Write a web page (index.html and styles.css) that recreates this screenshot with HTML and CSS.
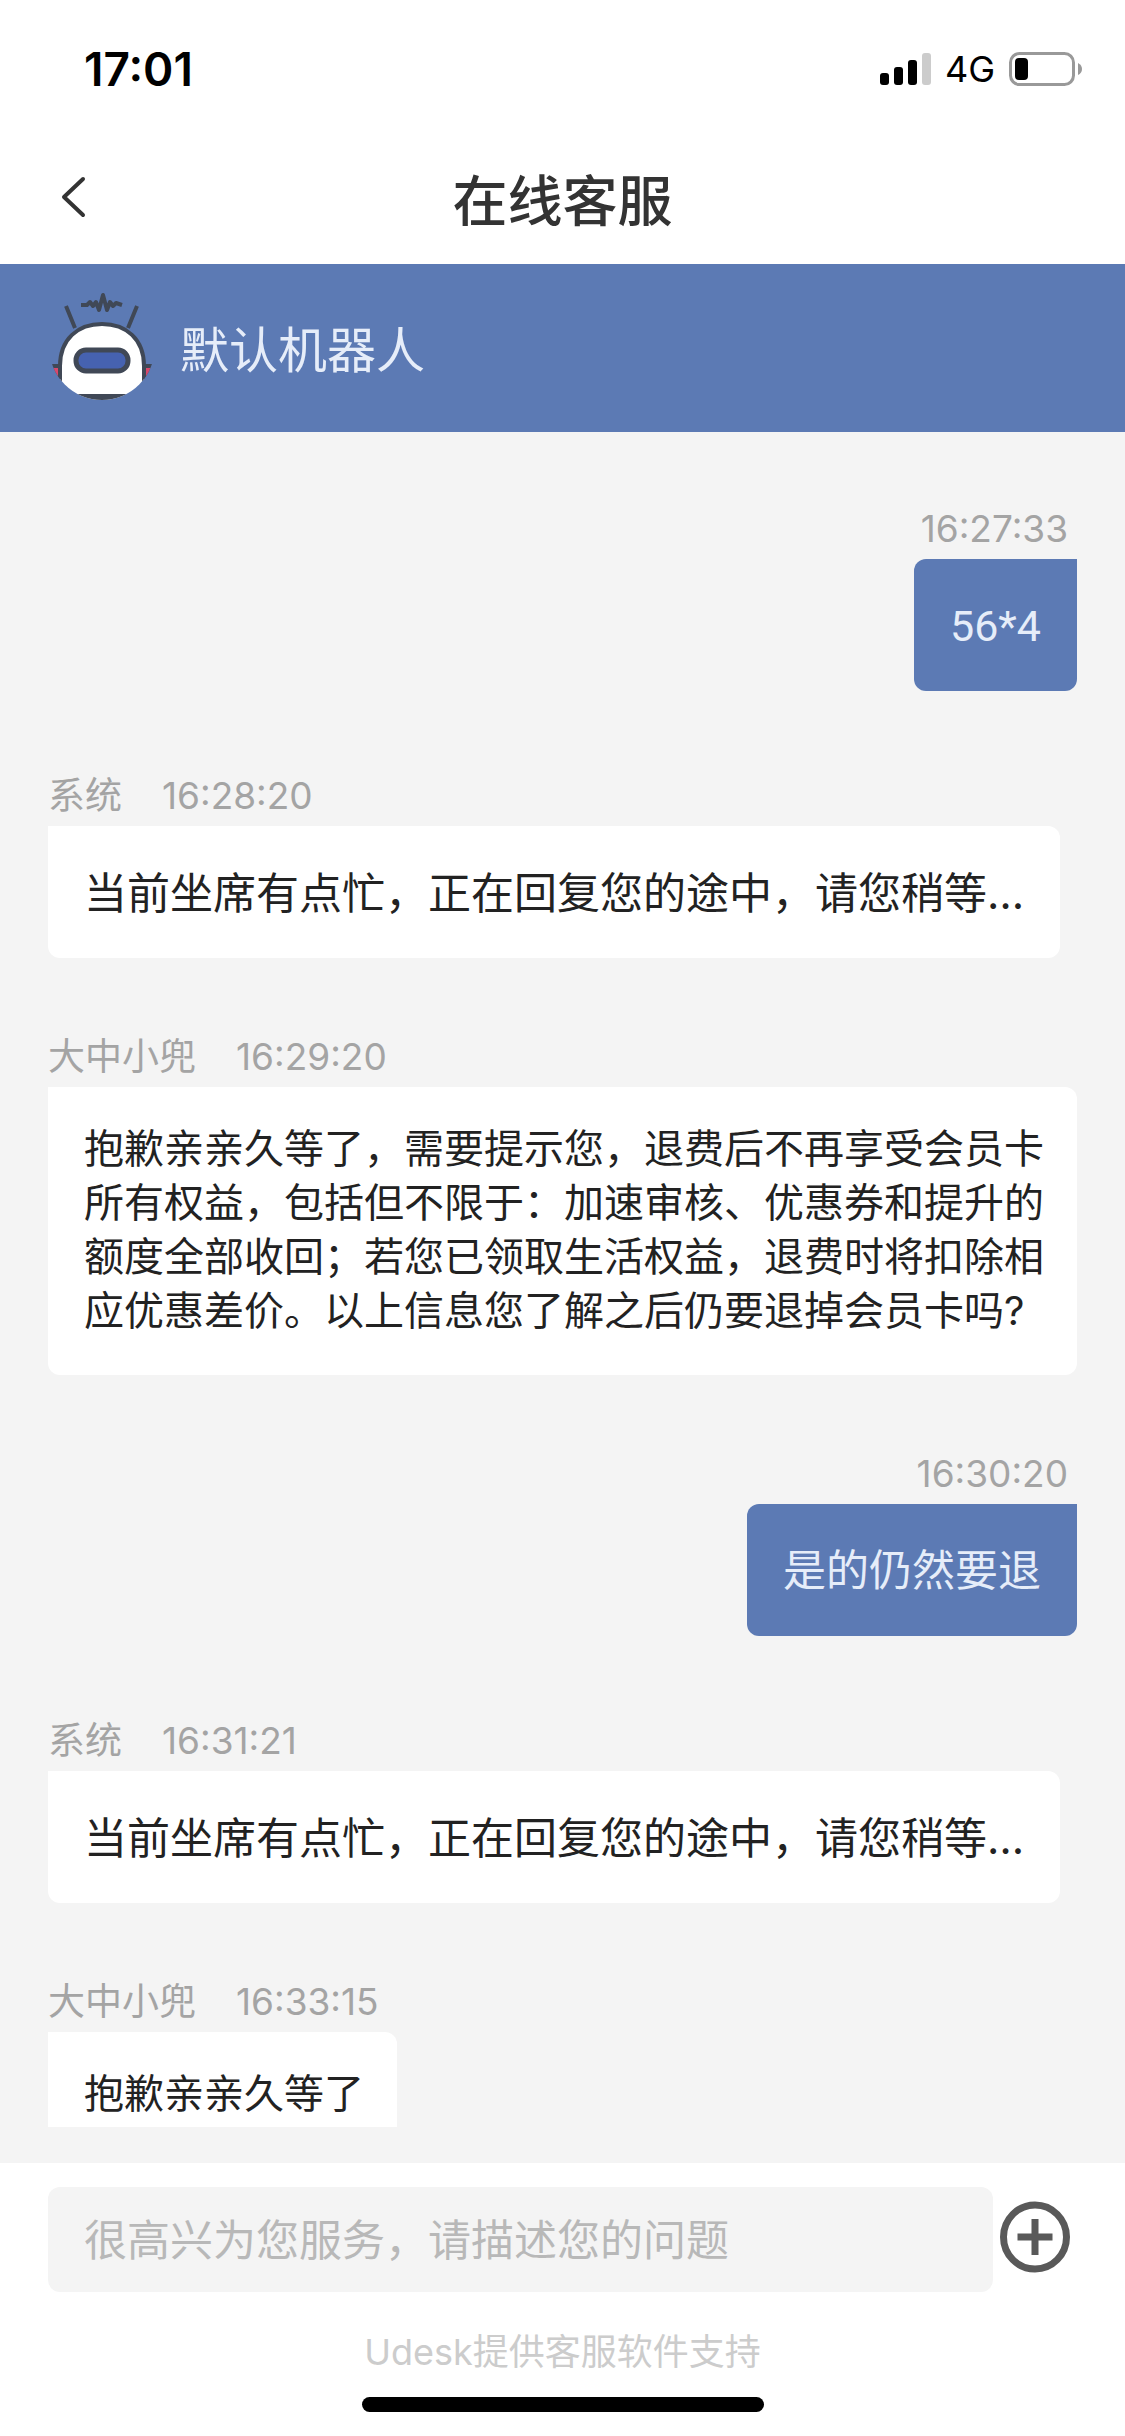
FILE: index.html
```html
<!DOCTYPE html>
<html lang="zh-CN">
<head>
    <meta charset="UTF-8">
    <meta name="viewport" content="width=device-width, initial-scale=1.0">
    <title>在线客服</title>
    <link rel="stylesheet" href="styles.css">
</head>
<body>
    <div class="status-bar">
        <span class="clock">17:01</span>
        <div class="status-icons">
            <svg class="signal" width="51" height="34" viewBox="0 0 51 34" aria-hidden="true">
                <rect x="0" y="21" width="9" height="12" rx="3"/>
                <rect x="14" y="15" width="9" height="18" rx="3"/>
                <rect x="28" y="8" width="9" height="25" rx="3"/>
                <rect x="42" y="1" width="9" height="32" rx="3" fill="#cccccc"/>
            </svg>
            <span class="network">4G</span>
            <svg class="battery" width="74" height="34" viewBox="0 0 74 34" aria-hidden="true">
                <rect x="1.5" y="1.5" width="63" height="31" rx="9" fill="none" stroke="#999999" stroke-width="3"/>
                <rect x="6" y="6" width="13" height="22" rx="4"/>
                <path d="M69 11q4 2 4 6t-4 6z" fill="#999999"/>
            </svg>
        </div>
    </div>

    <header class="nav-bar">
        <button type="button" class="back" aria-label="返回">
            <svg width="28" height="44" viewBox="0 0 28 44" aria-hidden="true">
                <path d="M24 4L5 22l19 18" fill="none" stroke="#333333" stroke-width="4" stroke-linecap="round" stroke-linejoin="round"/>
            </svg>
        </button>
        <h1>在线客服</h1>
    </header>

    <div class="agent-bar">
        <svg class="avatar" width="130" height="140" viewBox="0 0 130 140" aria-hidden="true">
            <clipPath id="avatar-clip"><ellipse cx="62" cy="68" rx="53" ry="54"/></clipPath>
            <g stroke="#404856" fill="none">
                <path d="M41 27h6l3-3 3 4 3-4 3 8 4-15 4 15 3-8 3 4 3-3 6 2" stroke-width="4" stroke-linejoin="round"/>
                <path d="M26 28l9 22M97 28l-9 22" stroke-width="4"/>
            </g>
            <g clip-path="url(#avatar-clip)">
                <path d="M10 86h10v18H10zM103 86h12v18h-12z" fill="#404856"/>
                <path d="M12 90h6v9h-6zM106 90h8v9h-8z" fill="#d9486c"/>
                <path d="M20 130V88C20 61 38 46 62 46s42 15 42 42v42z" fill="#ffffff" stroke="#404856" stroke-width="4"/>
                <path d="M20 116h84v8H20z" fill="#404856"/>
                <rect x="36" y="72" width="52" height="21" rx="10" fill="#4662b0" stroke="#404856" stroke-width="5"/>
            </g>
        </svg>
        <h2>默认机器人</h2>
    </div>

    <main class="chat">
        <div class="message mine">
            <div class="meta"><time>16:27:33</time></div>
            <p class="bubble">56*4</p>
        </div>

        <div class="message">
            <div class="meta"><span>系统</span><time>16:28:20</time></div>
            <p class="bubble">当前坐席有点忙，正在回复您的途中，请您稍等…</p>
        </div>

        <div class="message">
            <div class="meta"><span>大中小兜</span><time>16:29:20</time></div>
            <p class="bubble rich">抱歉亲亲久等了，需要提示您，退费后不再享受会员卡所有权益，包括但不限于：加速审核、优惠券和提升的额度全部收回；若您已领取生活权益，退费时将扣除相应优惠差价。以上信息您了解之后仍要退掉会员卡吗?</p>
        </div>

        <div class="message mine">
            <div class="meta"><time>16:30:20</time></div>
            <p class="bubble">是的仍然要退</p>
        </div>

        <div class="message">
            <div class="meta"><span>系统</span><time>16:31:21</time></div>
            <p class="bubble">当前坐席有点忙，正在回复您的途中，请您稍等…</p>
        </div>

        <div class="message">
            <div class="meta"><span>大中小兜</span><time>16:33:15</time></div>
            <p class="bubble rich">抱歉亲亲久等了</p>
        </div>
    </main>

    <footer class="footer">
        <form class="composer">
            <input type="text" aria-label="输入问题" placeholder="很高兴为您服务，请描述您的问题">
            <button type="button" aria-label="更多">
                <svg width="70" height="72" viewBox="0 0 70 72" aria-hidden="true">
                    <ellipse cx="35" cy="36" rx="31.500" ry="32" fill="none" stroke="#595959" stroke-width="7"/>
                    <path d="M35 18v36M17.500 36h35" stroke="#595959" stroke-width="7"/>
                </svg>
            </button>
        </form>
        <p class="powered">Udesk提供客服软件支持</p>
        <div class="home-bar"></div>
    </footer>
</body>
</html>
```
FILE: styles.css
```css
* {
    box-sizing: border-box;
}
body {
    display: flex;
    flex-direction: column;
    height: 100vh;
    margin: 0;
    background-color: #f4f4f4;
    color: #222222;
    font-family: Inter, "Noto Sans CJK SC", sans-serif;
}
h1, h2, p {
    margin: 0;
}
button {
    display: flex;
    padding: 0;
    border: none;
    background: none;
    cursor: pointer;
}

/* 顶部状态栏 */
.status-bar {
    display: flex;
    justify-content: space-between;
    align-items: center;
    height: 138px;
    padding: 0 42px 0 84px;
    background-color: #ffffff;
    color: #000000;
}
.clock {
    font-size: 46px;
    font-weight: 600;
}
.status-icons {
    display: flex;
    align-items: center;
}
.network {
    margin: 0 14px;
    font-size: 36px;
    font-weight: 400;
}

/* 导航 */
.nav-bar {
    display: grid;
    grid-template-columns: 1fr auto 1fr;
    align-items: center;
    height: 126px;
    padding: 0 59px 8px;
    background-color: #ffffff;
}
.nav-bar h1 {
    color: #333333;
    font-size: 55px;
    font-weight: 500;
}
.agent-bar {
    display: flex;
    align-items: center;
    gap: 10px;
    height: 168px;
    padding: 0 40px;
    background-color: #5c7ab4;
}
.agent-bar h2 {
    padding-bottom: 4px;
    color: #e6edf9;
    font-size: 49px;
    font-weight: 400;
}

/* 消息列表 */
.chat {
    flex: 1;
    min-height: 0;
    margin-bottom: 36px;
    padding: 78px 48px 0;
    overflow: hidden;
}
.message {
    display: flex;
    flex-direction: column;
    align-items: flex-start;
    margin-bottom: 80px;
}
.meta {
    display: flex;
    gap: 40px;
    height: 49px;
    color: #a4a4a4;
    font-size: 37px;
    line-height: 37px;
}
.bubble {
    padding: 37px 36px 35px;
    border-radius: 0 12px 12px 12px;
    background-color: #ffffff;
    font-size: 43px;
    line-height: 60px;
}
.rich {
    padding: 35px 33px 37px 36px;
    font-size: 40px;
    line-height: 54px;
}
.mine {
    align-items: flex-end;
    margin-bottom: 86px;
}
.mine .meta {
    padding-right: 9px;
}
.mine .bubble {
    border-radius: 12px 0 12px 12px;
    background-color: #5c7ab4;
    color: #e6edf9;
    font-family: Roboto, "Noto Sans CJK SC", sans-serif;
}

/* 输入区 */
.footer {
    padding: 24px 48px;
    background-color: #ffffff;
}
.composer {
    display: flex;
    align-items: center;
    gap: 7px;
    margin-right: 7px;
}
.composer input {
    flex: 1;
    min-width: 0;
    height: 105px;
    padding: 0 36px;
    border: none;
    border-radius: 12px;
    background-color: #f4f4f4;
    font-family: inherit;
    font-size: 43px;
}
.composer button {
    padding-bottom: 6px;
}
.composer input::placeholder {
    color: #b8b8b8;
}
.powered {
    margin: 36px 0 21px;
    color: #cccccc;
    font-size: 36px;
    line-height: 48px;
    text-align: center;
}
.home-bar {
    width: 402px;
    height: 15px;
    margin: 0 auto;
    border-radius: 8px;
    background-color: #000000;
}
```
